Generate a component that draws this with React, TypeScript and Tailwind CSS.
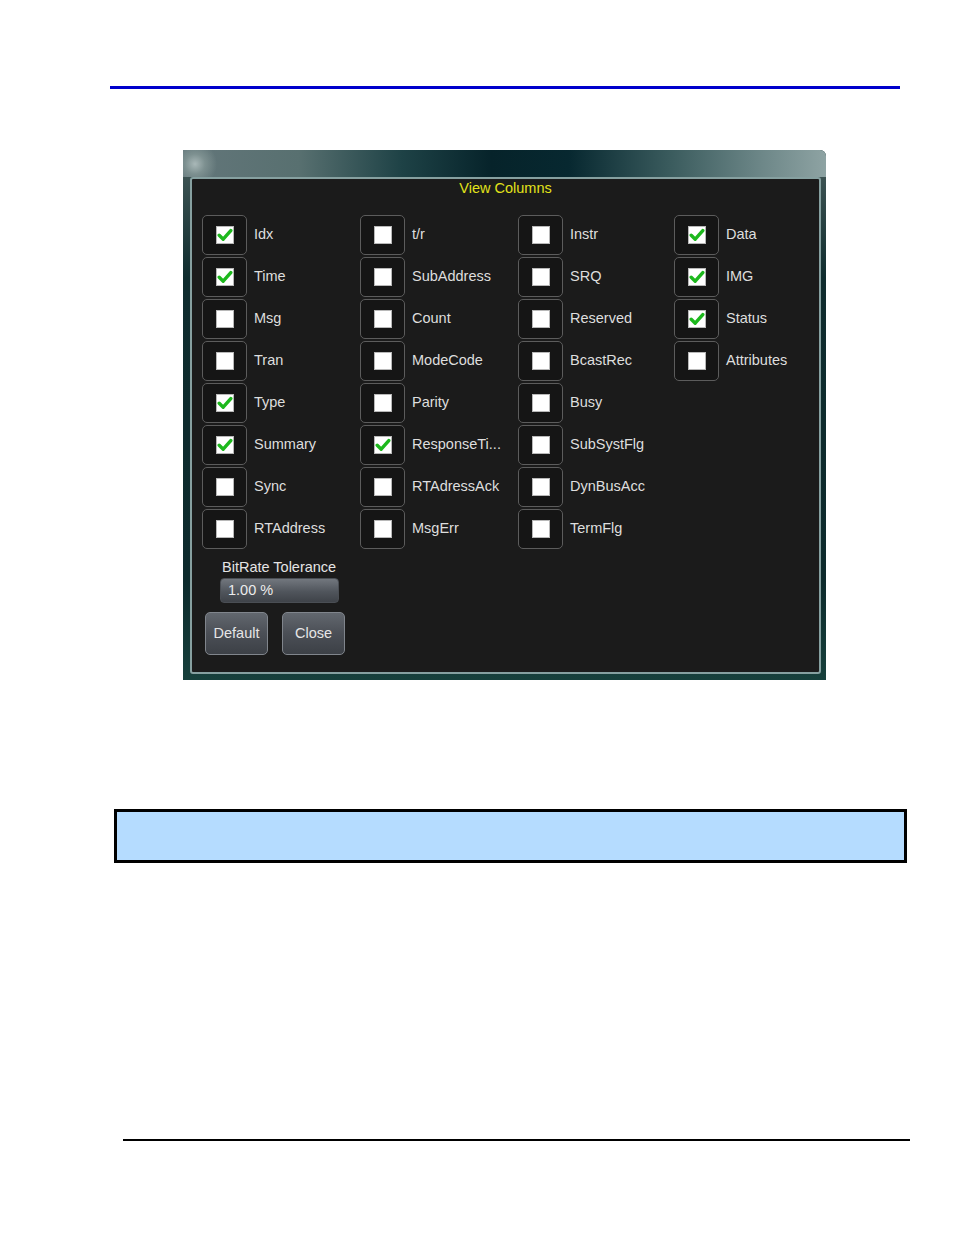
import React from 'react';

type Col = { label: string; checked: boolean };

const columns: Col[][] = [
  [
    { label: 'Idx', checked: true },
    { label: 'Time', checked: true },
    { label: 'Msg', checked: false },
    { label: 'Tran', checked: false },
    { label: 'Type', checked: true },
    { label: 'Summary', checked: true },
    { label: 'Sync', checked: false },
    { label: 'RTAddress', checked: false },
  ],
  [
    { label: 't/r', checked: false },
    { label: 'SubAddress', checked: false },
    { label: 'Count', checked: false },
    { label: 'ModeCode', checked: false },
    { label: 'Parity', checked: false },
    { label: 'ResponseTi...', checked: true },
    { label: 'RTAdressAck', checked: false },
    { label: 'MsgErr', checked: false },
  ],
  [
    { label: 'Instr', checked: false },
    { label: 'SRQ', checked: false },
    { label: 'Reserved', checked: false },
    { label: 'BcastRec', checked: false },
    { label: 'Busy', checked: false },
    { label: 'SubSystFlg', checked: false },
    { label: 'DynBusAcc', checked: false },
    { label: 'TermFlg', checked: false },
  ],
  [
    { label: 'Data', checked: true },
    { label: 'IMG', checked: true },
    { label: 'Status', checked: true },
    { label: 'Attributes', checked: false },
  ],
];

const colWidths = ['w-[158px]', 'w-[158px]', 'w-[156px]', 'w-[140px]'];

const CheckRow = ({ label, checked }: Col) => (
  <div className="flex items-center h-[40px]">
    <div className="w-[45px] h-[40px] rounded-[5px] border border-[#5c5c5c] bg-[#151515] flex items-center justify-center">
      <div className="w-[18px] h-[18px] bg-white border border-[#b8b8b8] flex items-center justify-center">
        {checked && (
          <svg width="16" height="16" viewBox="0 0 16 16">
            <path d="M2.2 8.3 L6.2 12.2 L13.8 3.6" fill="none" stroke="#1db81d" strokeWidth="3.4" strokeLinecap="round" strokeLinejoin="round" />
          </svg>
        )}
      </div>
    </div>
    <span className="ml-[7px] text-[14.5px] text-[#dedede] whitespace-nowrap">{label}</span>
  </div>
);

const ViewColumnsDialog = () => (
  <div className="ml-[183px] w-[643px] h-[530px] flex flex-col bg-[#123030] rounded-tr-[6px] overflow-hidden font-['Liberation_Sans',Arial,sans-serif]">
    {/* title bar */}
    <div className="h-[27px] shrink-0 bg-[radial-gradient(circle_at_12px_14px,#a9b8b8_0px,#7d9090_10px,transparent_22px),linear-gradient(to_right,#63767a_0%,#587070_18%,#1e4246_34%,#06232a_48%,#072830_60%,#3b5c5e_76%,#6d8788_90%,#8ea3a3_100%)]" />
    <div className="flex-1 flex pl-[7px] pr-[5px] pb-[6px] bg-[linear-gradient(to_bottom,#3c5252,#0f2c2e_20%,#0d2a2c_80%,#17403c)]">
      <div className="flex-1 flex flex-col border-2 border-[#86a0a0] rounded-[3px] bg-[#1b1b1b] pl-[10px]">
        <div className="pt-[1px] pr-[10px] text-center text-[14.5px] leading-[16px] text-[#e2e21a]">View Columns</div>
        <div className="mt-[19px] flex">
          {columns.map((col, i) => (
            <div key={i} className={`${colWidths[i]} flex flex-col gap-[2px]`}>
              {col.map((c) => (
                <CheckRow key={c.label} {...c} />
              ))}
            </div>
          ))}
        </div>
        <div className="mt-[10px] ml-[20px] text-[14.5px] leading-[16px] text-[#e4e4e4]">BitRate Tolerance</div>
        <div className="mt-[3px] ml-[18px] w-[119px] h-[25px] rounded-[4px] border border-[#4a4e54] bg-[linear-gradient(to_bottom,#72777e,#50555c_55%,#3f4349)] flex items-center pl-[7px] text-[14.5px] text-[#ececec]">
          1.00 %
        </div>
        <div className="mt-[9px] ml-[3px] flex gap-[14px]">
          <button className="w-[63px] h-[43px] rounded-[5px] border border-[#80858c] bg-[linear-gradient(to_bottom,#62676e,#4b4f56_50%,#3c4046)] text-[14.5px] text-[#e6e6e6]">
            Default
          </button>
          <button className="w-[63px] h-[43px] rounded-[5px] border border-[#80858c] bg-[linear-gradient(to_bottom,#62676e,#4b4f56_50%,#3c4046)] text-[14.5px] text-[#e6e6e6]">
            Close
          </button>
        </div>
      </div>
    </div>
  </div>
);

const App = () => {
  return (
    <div className="w-[954px] h-[1235px] bg-white pt-[86px]">
      <div className="ml-[110px] w-[790px] h-[3px] bg-[#0000cc]" />
      <div className="mt-[61px]">
        <ViewColumnsDialog />
      </div>
      <div className="mt-[129px] ml-[114px] w-[793px] h-[54px] border-[3px] border-black bg-[#b5dcff]" />
      <div className="mt-[276px] ml-[123px] w-[787px] h-[2px] bg-black" />
    </div>
  );
};

export default App;
